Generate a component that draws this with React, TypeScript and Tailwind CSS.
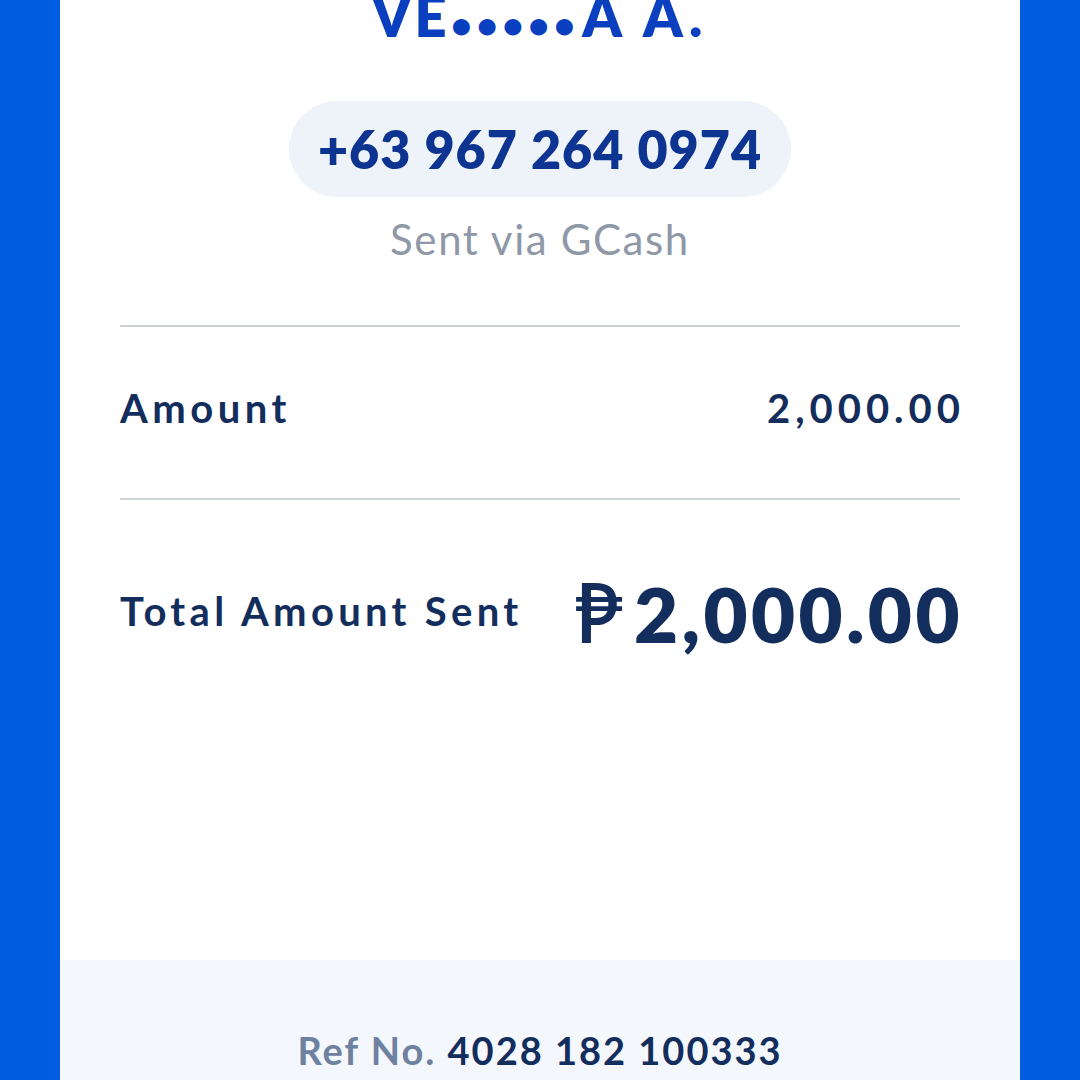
import React from 'react';

const font = { fontFamily: 'Lato, "Noto Sans", sans-serif' };

function Row({ label, value }: { label: string; value: string }) {
    return (
        <div className="flex items-center justify-between h-[173px] pb-[10px] border-b-2 border-[#cdd2d9]">
            <span className="text-[40px] font-bold tracking-[4.5px] text-[#132d5c]">{label}</span>
            <span className="text-[40px] font-bold tracking-[5px] text-[#132d5c] mr-[-5px]">{value}</span>
        </div>
    );
}

export default function App() {
    return (
        <div className="w-[1080px] h-[1080px] overflow-hidden bg-[#005ce1] px-[60px]" style={font}>
            <div className="h-full bg-white flex flex-col">
                <div className="flex flex-col items-center">
                    <h1 className="mt-[-16px] h-[64px] flex items-baseline text-[56px] leading-[64px] font-extrabold tracking-[3px] text-[#0a3fbf]">
                        <span>VE</span>
                        <span className="text-[34px] tracking-[6px] mx-[2px]">•••••</span>
                        <span className="tracking-[6px]">A A.</span>
                    </h1>
                    <div className="mt-[53px] h-[96px] w-[502px] rounded-full bg-[#eef2f9] flex items-center justify-center">
                        <span className="text-[52px] font-extrabold tracking-[1px] text-[#0e3491]">+63 967 264 0974</span>
                    </div>
                    <p className="mt-[18px] text-[42px] leading-[48px] tracking-[1.6px] text-[#8e98a7]">Sent via GCash</p>
                </div>

                <div className="mx-[60px] mt-[62px] border-t-2 border-[#cdd2d9]">
                    <Row label="Amount" value="2,000.00" />
                    <div className="flex items-center justify-between h-[230px] pb-[8px]">
                        <span className="text-[40px] font-bold tracking-[4.3px] text-[#132d5c]">Total Amount Sent</span>
                        <span className="flex items-baseline text-[76px] font-extrabold tracking-[3.5px] text-[#132d5c] mr-[-3px]">
                            <span className="text-[82px] font-semibold mr-[8px]">₱</span>
                            <span>2,000.00</span>
                        </span>
                    </div>
                </div>

                <div className="mt-auto h-[120px] bg-[#f4f7fc] flex items-end justify-center pb-[1px]">
                    <p className="text-[38px] font-bold tracking-[2px]">
                        <span className="text-[#6f81a0]">Ref No. </span>
                        <span className="text-[#132d5c]">4028 182 100333</span>
                    </p>
                </div>
            </div>
        </div>
    );
}
